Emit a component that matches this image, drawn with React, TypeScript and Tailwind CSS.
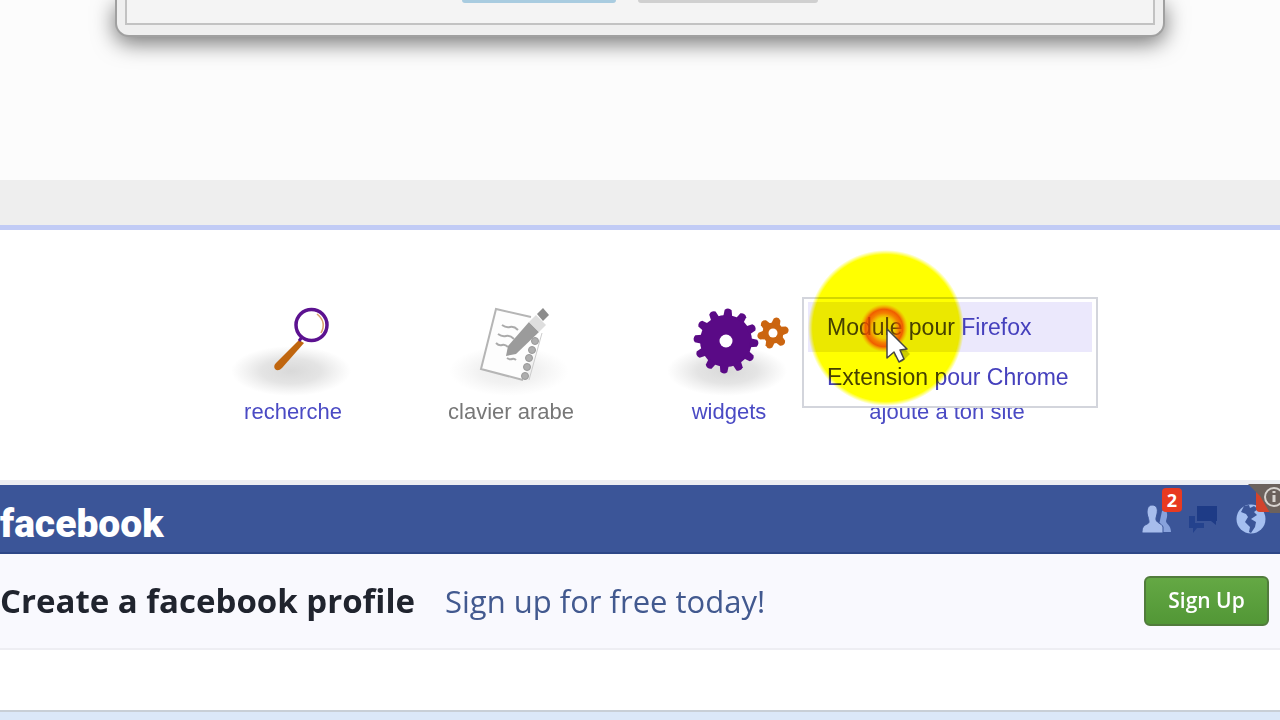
import { useState } from "react";
import type { ReactNode } from "react";

const GEAR_TEETH = [4, 34, 64, 94, 124, 154, 184, 214, 244, 274, 304, 334];
const SMALL_GEAR_TEETH = [17, 77, 137, 197, 257, 317];

function Shadow({ id, opacity }: { id: string; opacity: number }) {
  return (
    <>
      <defs>
        <radialGradient id={id}>
          <stop offset="0" stopColor="#888" stopOpacity={opacity} />
          <stop offset="0.5" stopColor="#888" stopOpacity={opacity * 0.7} />
          <stop offset="1" stopColor="#999" stopOpacity="0" />
        </radialGradient>
      </defs>
      <ellipse cx="68" cy="73" rx="60" ry="25" fill={`url(#${id})`} />
    </>
  );
}

function SearchIcon() {
  return (
    <svg viewBox="0 0 140 100" className="h-[100px] w-[140px]" aria-hidden="true">
      <Shadow id="search-shadow" opacity={0.32} />
      <path d="M76 42 L81 45 L59 70 Q55 74 52 71 Q50 68 53 65 Z" fill="#c0660f" />
      <circle cx="88.500" cy="27" r="15.500" fill="#fff" stroke="#5c1290" strokeWidth="3.500" />
      <path d="M94 16 Q104 24 98 35" fill="none" stroke="#dba06c" strokeWidth="1.500" />
      <path d="M76 43 L79 39" stroke="#5c1290" strokeWidth="3" />
    </svg>
  );
}

function NotebookIcon() {
  return (
    <svg viewBox="0 0 140 100" className="h-[100px] w-[140px]" aria-hidden="true">
      <Shadow id="notebook-shadow" opacity={0.16} />
      <path d="M55 11 L100 22 L83 82 L40 71 Z" fill="#fdfdfd" />
      <path d="M90 19 L55 11 L40 71 L82 82" fill="none" stroke="#b5b5b5" strokeWidth="2" />
      <path
        d="M61 27 q4 3 8 2 t8 3 M57 36 q4 3 8 2 t8 3 M55 45 q3 3 6 2 t6 2 M66 60 q3 2 5 1 t4 1"
        fill="none"
        stroke="#aaa"
        strokeWidth="2"
      />
      <g fill="#aeaeae" stroke="#999" strokeWidth="1">
        <circle cx="94" cy="43" r="3.500" />
        <circle cx="91" cy="52" r="3.500" />
        <circle cx="88" cy="60" r="3.500" />
        <circle cx="86" cy="69" r="3.500" />
        <circle cx="84" cy="78" r="3.500" />
      </g>
      <path d="M101 35 L88 82" stroke="#ccc" strokeWidth="1" />
      <path d="M88 24 L98 34 L75 56 L65 58 L67 48 Z" fill="#9b9b9b" />
      <path d="M88 24 L95 17 L105 27 L98 34 Z" fill="#dedede" />
      <path d="M96 16 L102 10 L108 17 L102 23 Z" fill="#8c8c8c" />
    </svg>
  );
}

function WidgetsIcon() {
  return (
    <svg viewBox="0 0 140 100" className="h-[100px] w-[140px]" aria-hidden="true">
      <Shadow id="widgets-shadow" opacity={0.32} />
      <g transform="translate(67 43)" fill="#5a0a86">
        <circle r="26" />
        {GEAR_TEETH.map((angle) => (
          <path key={angle} transform={`rotate(${angle})`} d="M-4.500 -24 L-3.500 -31 Q0 -34 3.500 -31 L4.500 -24 Z" />
        ))}
        <circle r="6.500" fill="#fff" />
      </g>
      <g transform="translate(114 35)" fill="#cb6510">
        <circle r="10.500" />
        {SMALL_GEAR_TEETH.map((angle) => (
          <path key={angle} transform={`rotate(${angle})`} d="M-4.500 -8 L-3.500 -14 Q0 -18 3.500 -14 L4.500 -8 Z" />
        ))}
        <circle r="4.500" fill="#fff" />
      </g>
    </svg>
  );
}

function Tool({ icon, label, muted }: { icon: ReactNode; label: string; muted?: boolean }) {
  return (
    <a href="#" className="flex flex-col items-center">
      {icon}
      <span className={`text-[22px] leading-[28px] whitespace-nowrap ${muted ? "text-[#777]" : "text-[#4a4ac4]"}`}>
        {label}
      </span>
    </a>
  );
}

function Pointer() {
  return (
    <div className="pointer-events-none absolute top-[-48px] left-[-30px] h-[156px] w-[156px]">
      <svg viewBox="0 0 156 156" className="absolute inset-0 mix-blend-multiply" aria-hidden="true">
        <defs>
          <radialGradient id="spot">
            <stop offset="0.940" stopColor="#ffff00" />
            <stop offset="1" stopColor="#ffff00" stopOpacity="0" />
          </radialGradient>
        </defs>
        <circle cx="78" cy="78" r="78" fill="url(#spot)" />
      </svg>
      <svg viewBox="0 0 156 156" className="absolute inset-0" aria-hidden="true">
        <defs>
          <radialGradient id="click-ring">
            <stop offset="0.420" stopColor="#ff6000" stopOpacity="0.150" />
            <stop offset="0.620" stopColor="#f84800" stopOpacity="0.650" />
            <stop offset="0.780" stopColor="#f04400" stopOpacity="0.850" />
            <stop offset="1" stopColor="#ff9000" stopOpacity="0" />
          </radialGradient>
        </defs>
        <circle cx="76" cy="78" r="24" fill="url(#click-ring)" />
        <path d="M84 86 L102 104 L94 112 L86 106 Z" fill="#000" opacity="0.200" />
        <path
          d="M79 79 L79 108 L86 102 L91 112 L96 109 L92 100 L99 99 Z"
          fill="#fff"
          stroke="#444"
          strokeWidth="1.500"
          strokeLinejoin="round"
        />
      </svg>
    </div>
  );
}

function AddMenu() {
  const [active, setActive] = useState("Module pour Firefox");

  return (
    <div className="absolute top-[-1px] left-[-36px] w-[296px] border-2 border-[#d3d5dc] bg-white px-1 pt-[3px] pb-1">
      {["Module pour Firefox", "Extension pour Chrome"].map((item) => (
        <button
          key={item}
          type="button"
          onMouseEnter={() => setActive(item)}
          className={`block h-[50px] w-full pl-[19px] text-left text-[23px] leading-[26px] whitespace-nowrap text-[#4540bd] ${
            active === item ? "bg-[#ebe8fc]" : ""
          }`}
        >
          {item}
        </button>
      ))}
    </div>
  );
}

function HeaderIcons() {
  return (
    <div className="flex gap-[17px] pt-[18px] pr-[14px]">
      <button type="button" className="relative h-8 w-[30px]">
        <svg viewBox="0 0 30 32" className="h-8 w-[30px]" aria-hidden="true">
          <path
            d="M20 8 C23 6 26 9 25 14 L24 18 C24 21 29 22 29 29 L21 29 C20 25 18 23 17 22 Z"
            fill="#88a2dc"
          />
          <path
            d="M10 2 C15 2 16 6 15 11 L14 15 C13 20 20 20 21 24 L21 30 L0 30 C0 25 1 23 5 21 C8 20 7 18 6 14 C4 9 5 2 10 2 Z"
            fill="#a7bdec"
            stroke="#3b5598"
            strokeWidth="1"
          />
        </svg>
        <span className="absolute top-[-15px] left-[20px] h-6 w-5 rounded-sm bg-[#e83a20] text-center font-['Open_Sans',sans-serif] text-[18px] leading-6 font-bold text-white">
          2
        </span>
      </button>
      <button type="button" className="h-8 w-[30px]">
        <svg viewBox="0 0 30 32" className="h-8 w-[30px]" aria-hidden="true">
          <path d="M8 3 H28 V18 H27 V22 L22 18 H8 Z" fill="#1e3b86" />
          <path d="M0 13 H6 V20 H15 V25 H8 L4 30 V25 H0 Z" fill="#24428d" />
        </svg>
      </button>
      <button type="button" className="relative h-8 w-[30px]">
        <svg viewBox="0 0 30 32" className="h-8 w-[30px]" aria-hidden="true">
          <circle cx="15" cy="16" r="14.500" fill="#a5bff0" />
          <path
            d="M8 3 L13 2 L14 5 L18 3 L22 6 L18 9 L21 12 L15 16 L20 19 L19 24 L15 30 L13 29 L14 24 L9 19 L12 14 L10 11 L5 9 Z"
            fill="#3b5598"
          />
        </svg>
        <span className="absolute top-[-15px] left-[20px] h-6 w-5 rounded-sm bg-[#d3432c]" />
      </button>
    </div>
  );
}

export default function App() {
  return (
    <div className="min-h-screen overflow-x-hidden bg-[#dbe8f8] font-['Liberation_Sans',Arial,sans-serif]">
      <section className="h-[180px] bg-[#fcfcfc] px-[115px]">
        <div className="h-[37px] rounded-b-[14px] border-x-2 border-b-2 border-[#a0a0a0] bg-[#efefef] px-2 shadow-[0_6px_22px_rgba(0,0,0,0.550)]">
          <div className="flex h-[25px] justify-center gap-[22px] border-x-2 border-b-2 border-[#c2c2c2] bg-[#f4f4f4]">
            <button type="button" className="h-[3px] w-[154px] rounded-b-sm bg-[#a9cce0]" />
            <button type="button" className="h-[3px] w-[180px] rounded-b-sm bg-[#d0d0d0]" />
          </div>
        </div>
      </section>
      <div className="h-[50px] border-b-[5px] border-[#c1cbf5] bg-[#eee]" />

      <section className="bg-white pt-[68px] pr-[40px] pb-[54px]">
        <div className="mx-auto grid w-[872px] grid-cols-4">
          <Tool icon={<SearchIcon />} label="recherche" />
          <Tool icon={<NotebookIcon />} label="clavier arabe" muted />
          <Tool icon={<WidgetsIcon />} label="widgets" />
          <div className="relative">
            <Tool icon={<div className="h-[100px]" />} label="ajoute à ton site" />
            <AddMenu />
            <Pointer />
          </div>
        </div>
      </section>

      <header className="relative flex h-[74px] justify-between border-t-[5px] border-b-2 border-t-[#eceef2] border-b-[#2e4787] bg-[#3b5598]">
        <a href="#" className="h-[67px] font-[Roboto,sans-serif] text-[39px] leading-[78px] font-black text-white">
          facebook
        </a>
        <HeaderIcons />
        <div className="absolute top-[-1px] right-0 h-[29px] w-[32px] overflow-hidden">
          <svg viewBox="0 0 32 29" className="h-[29px] w-[32px]" aria-hidden="true">
            <path d="M0 0 H32 V29 H22 L12 12 Z" fill="#6c625d" />
            <circle cx="26" cy="13" r="9" fill="none" stroke="#d8d4d0" strokeWidth="2" />
            <path d="M26 11 V18 M26 7 V9" stroke="#d8d4d0" strokeWidth="3" />
          </svg>
        </div>
      </header>

      <section className="flex h-[96px] items-center border-b-2 border-[#eeeef3] bg-[#f9f9fe] pr-[11px] font-['Open_Sans',sans-serif]">
        <h1 className="text-[33px] leading-10 font-bold whitespace-nowrap text-[#20242e]">Create a facebook profile</h1>
        <a href="#" className="ml-[30px] text-[31px] leading-10 whitespace-nowrap text-[#42598f]">
          Sign up for free today!
        </a>
        <button
          type="button"
          className="ml-auto h-[50px] w-[125px] rounded-md border-2 border-[#517c3c] bg-linear-to-b from-[#64a844] to-[#529736] text-[21px] font-semibold text-white"
        >
          Sign Up
        </button>
      </section>
      <div className="h-[62px] border-b-2 border-[#c8cfd6] bg-white" />
    </div>
  );
}
